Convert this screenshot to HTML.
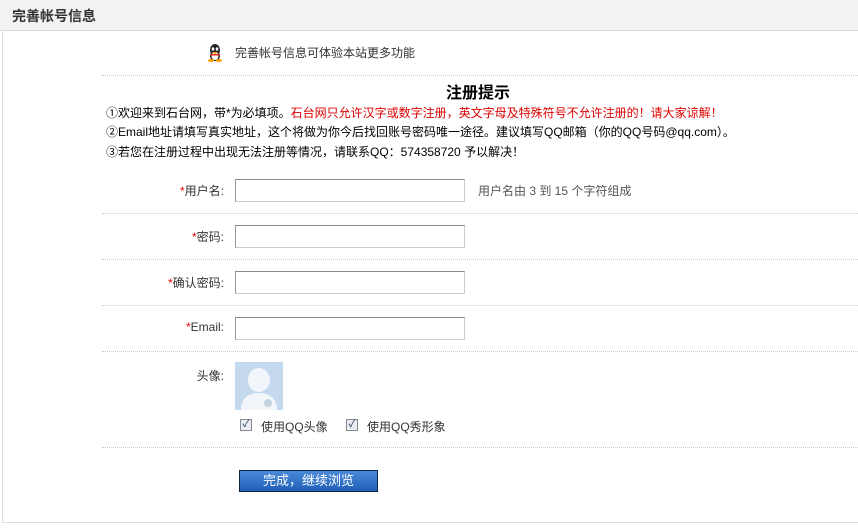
<!DOCTYPE html>
<html><head><meta charset="utf-8"><style>
*{margin:0;padding:0;box-sizing:border-box}
body{width:858px;height:529px;background:#fff;font-family:"Liberation Sans","Noto Sans CJK SC",sans-serif;font-size:12px;color:#333;position:relative;overflow:hidden}
.a{position:absolute;white-space:nowrap}
.hd{left:0;top:0;width:858px;height:31px;background:#f2f2f2;border-bottom:1px solid #dcdcdc}
.box{left:2px;top:30px;width:870px;height:493px;border-left:1px solid #ddd;border-bottom:1px solid #ddd}
.dl{left:102px;width:756px;height:0;border-top:1px dotted #ccc}
.inp{left:235px;width:230px;height:23px;border:1px solid #ccc;border-top-color:#888;border-left-color:#999;background:#fff}
.lb{right:634px;text-align:right;color:#333}
.lb b{color:#e00;font-weight:normal}
.cb{width:12px;height:12px;border:1px solid #8a8a8a;background:#e8ecf4;font-size:10px;line-height:10px;text-align:center;color:#234}
</style></head><body>
<div class="a hd"></div>
<div class="a box"></div>
<div class="a" style="left:12px;top:6px;font-size:14px;font-weight:bold;color:#333">完善帐号信息</div>
<svg class="a" style="left:207px;top:44px" width="16" height="18" viewBox="0 0 16 18"><ellipse cx="8" cy="6" rx="5" ry="6" fill="#222"/><ellipse cx="8" cy="12" rx="5" ry="5" fill="#222"/><ellipse cx="8" cy="12" rx="3.5" ry="4" fill="#fff"/><ellipse cx="6" cy="5" rx="1.3" ry="1.8" fill="#fff"/><ellipse cx="10" cy="5" rx="1.3" ry="1.8" fill="#fff"/><path d="M5 8h6l-3 2z" fill="#f90"/><path d="M3 10h10v1.5H3z" fill="#e22"/><ellipse cx="4" cy="16.5" rx="3" ry="1.5" fill="#f90"/><ellipse cx="12" cy="16.5" rx="3" ry="1.5" fill="#f90"/></svg>
<div class="a" style="left:235px;top:44px;color:#333">完善帐号信息可体验本站更多功能</div>
<div class="a dl" style="top:75px"></div>
<div class="a" style="left:446px;top:79px;font-size:16px;font-weight:bold;color:#000">注册提示</div>
<div class="a" style="left:106px;top:104px;color:#000">①欢迎来到石台网，带*为必填项。<span style="color:#d00">石台网只允许汉字或数字注册，英文字母及特殊符号不允许注册的！请大家谅解！</span></div>
<div class="a" style="left:106px;top:123px;color:#000">②Email地址请填写真实地址，这个将做为你今后找回账号密码唯一途径。建议填写QQ邮箱（你的QQ号码@qq.com）。</div>
<div class="a" style="left:106px;top:143px;color:#000">③若您在注册过程中出现无法注册等情况，请联系QQ：574358720 予以解决！</div>

<div class="a lb" style="top:182px"><b>*</b>用户名:</div>
<div class="a inp" style="top:179px"></div>
<div class="a" style="left:478px;top:182px;color:#555">用户名由 3 到 15 个字符组成</div>
<div class="a dl" style="top:213px"></div>
<div class="a lb" style="top:228px"><b>*</b>密码:</div>
<div class="a inp" style="top:225px"></div>
<div class="a dl" style="top:259px"></div>
<div class="a lb" style="top:274px"><b>*</b>确认密码:</div>
<div class="a inp" style="top:271px"></div>
<div class="a dl" style="top:305px"></div>
<div class="a lb" style="top:320px"><b>*</b>Email:</div>
<div class="a inp" style="top:317px"></div>
<div class="a dl" style="top:351px"></div>
<div class="a lb" style="top:367px">头像:</div>
<svg class="a" style="left:235px;top:362px" width="48" height="48" viewBox="0 0 48 48"><rect width="48" height="48" fill="#c5d9ee"/><ellipse cx="24" cy="18" rx="11" ry="12" fill="#f2f6fb"/><path d="M6 48c0-12 8-17 18-17s18 5 18 17z" fill="#f2f6fb"/><circle cx="33" cy="41" r="4" fill="#c5d3e0"/></svg>
<div class="a cb" style="left:240px;top:419px">✓</div>
<div class="a" style="left:261px;top:418px;color:#333">使用QQ头像</div>
<div class="a cb" style="left:346px;top:419px">✓</div>
<div class="a" style="left:367px;top:418px;color:#333">使用QQ秀形象</div>
<div class="a dl" style="top:447px"></div>
<div class="a" style="left:239px;top:470px;width:139px;height:22px;background:linear-gradient(#4a8ad8,#1f5fb8);border:1px solid #0d2540;color:#fff;text-align:center;line-height:20px;font-size:13px">完成，继续浏览</div>
</body></html>
